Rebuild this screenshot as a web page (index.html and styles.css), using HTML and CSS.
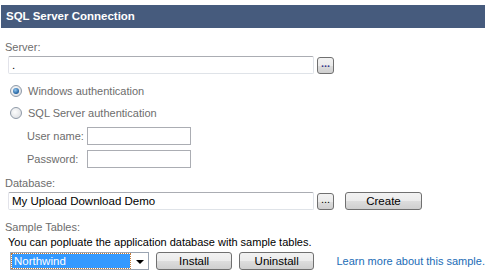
FILE: index.html
```html
<!DOCTYPE html>
<html lang="en">
<head>
<meta charset="UTF-8">
<meta name="viewport" content="width=device-width, initial-scale=1.0">
<title>SQL Server Connection</title>
<link rel="stylesheet" href="styles.css">
</head>
<body>
  <div class="panel">
    <div class="panel-title">SQL Server Connection</div>

    <div class="panel-body">
      <div class="field-label">Server:</div>
      <div class="field-row">
        <input type="text" class="text-box wide" value=".">
        <button type="button" class="browse">...</button>
      </div>

      <div class="auth-group">
        <div class="radio-row">
          <span class="radio checked"></span>
          <span>Windows authentication</span>
        </div>
        <div class="radio-row">
          <span class="radio"></span>
          <span>SQL Server authentication</span>
        </div>
        <div class="cred-row">
          <span class="cred-label">User name:</span>
          <input type="text" class="text-box short">
        </div>
        <div class="cred-row">
          <span class="cred-label">Password:</span>
          <input type="password" class="text-box short">
        </div>
      </div>

      <div class="field-label">Database:</div>
      <div class="field-row">
        <input type="text" class="text-box wide" value="My Upload Download Demo">
        <button type="button" class="browse dots">...</button>
        <button type="button" class="action create">Create</button>
      </div>

      <div class="field-label spaced">Sample Tables:</div>
      <div class="hint">You can popluate the application database with sample tables.</div>
      <div class="sample-row">
        <div class="combo">
          <span class="combo-value">Northwind</span>
          <span class="combo-arrow"></span>
        </div>
        <button type="button" class="action install">Install</button>
        <button type="button" class="action uninstall">Uninstall</button>
        <a href="#" class="learn-more">Learn more about this sample.</a>
      </div>
    </div>
  </div>
</body>
</html>
```
FILE: styles.css
```css
body {
  margin: 0;
  padding: 0;
  background: #fff;
  font-family: "Liberation Sans", Arial, sans-serif;
  font-size: 11px;
  color: #000;
}

.panel {
  padding-top: 5px;
}

.panel-title {
  margin-left: 1px;
  height: 23px;
  line-height: 23px;
  padding-left: 5px;
  background-color: #465b7d;
  color: #fff;
  font-weight: bold;
  font-size: 11.5px;
}

.panel-body {
  padding: 11px 0 0 5px;
}

.field-label {
  height: 16px;
  line-height: 16px;
  color: #6d6d6d;
}

.field-label.spaced {
  margin-top: 9px;
}

.field-row {
  display: flex;
  align-items: center;
  margin-top: 1px;
  padding-left: 3px;
  height: 18px;
}

.text-box {
  box-sizing: border-box;
  height: 18px;
  margin: 0;
  padding: 0 3px;
  border: 1px solid #dfe3e8;
  border-top-color: #abadb3;
  border-left-color: #e2e3ea;
  border-radius: 2px;
  font-family: "Liberation Sans", Arial, sans-serif;
  font-size: 11.5px;
  color: #000;
  outline: none;
}

.wide {
  width: 306px;
}

.short {
  width: 104px;
  border: 1px solid #abadb3;
  border-radius: 0;
}

.browse {
  box-sizing: border-box;
  width: 17px;
  height: 17px;
  margin-left: 3px;
  padding: 0 0 4px;
  border: 1px solid #707070;
  border-radius: 3px;
  background: linear-gradient(#f2f2f2, #ebebeb 50%, #dddddd 51%, #cfcfcf);
  font-family: "Liberation Sans", Arial, sans-serif;
  font-size: 11px;
  font-weight: bold;
  line-height: 10px;
  color: #3a3a8a;
}

.dots {
  font-weight: normal;
  color: #000;
}

.action {
  box-sizing: border-box;
  width: 77px;
  height: 18px;
  margin: 0;
  padding: 0;
  border: 1px solid #707070;
  border-radius: 3px;
  background: linear-gradient(#f2f2f2, #ebebeb 50%, #dddddd 51%, #cfcfcf);
  font-family: "Liberation Sans", Arial, sans-serif;
  font-size: 11.5px;
  color: #000;
}

.create {
  margin-left: 11px;
}

.auth-group {
  padding: 6px 0 7px 5px;
}

.radio-row {
  display: flex;
  align-items: center;
  gap: 6px;
  height: 22px;
  color: #6d6d6d;
}

.radio {
  box-sizing: border-box;
  width: 12px;
  height: 12px;
  border: 1px solid #8f9aa8;
  border-radius: 50%;
  background: radial-gradient(circle at 40% 40%, #fdfdfd, #d6d9dd);
  display: flex;
  align-items: center;
  justify-content: center;
}

.radio.checked::after {
  content: "";
  width: 6px;
  height: 6px;
  border-radius: 50%;
  background: radial-gradient(circle at 40% 35%, #8fc6f0, #1f5f9e 70%);
}

.cred-row {
  display: flex;
  align-items: center;
  height: 18px;
  margin-top: 3px;
  padding-left: 17px;
  color: #6d6d6d;
  white-space: nowrap;
}

.cred-row + .cred-row {
  margin-top: 5px;
}

.cred-label {
  width: 60px;
}

.hint {
  height: 15px;
  line-height: 15px;
  padding-left: 3px;
}

.sample-row {
  display: flex;
  align-items: center;
  margin-top: 2px;
  padding-left: 5px;
  height: 18px;
  white-space: nowrap;
}

.combo {
  box-sizing: border-box;
  display: flex;
  align-items: center;
  width: 142px;
  height: 18px;
  padding: 1px;
  border: 1px solid #9aa4b2;
}

.combo-value {
  flex: 1;
  height: 14px;
  line-height: 14px;
  padding-left: 2px;
  background-color: #3399ff;
  outline: 1px dotted #c07a3a;
  color: #fff;
  font-size: 11.5px;
}

.combo-arrow {
  width: 0;
  height: 0;
  margin: 1px 3px 0 6px;
  border-left: 4px solid transparent;
  border-right: 4px solid transparent;
  border-top: 4px solid #000;
}

.install {
  margin-left: 7px;
}

.uninstall {
  margin-left: 7px;
}

.learn-more {
  margin-left: 22px;
  color: #1b6cb6;
  text-decoration: none;
}
```
